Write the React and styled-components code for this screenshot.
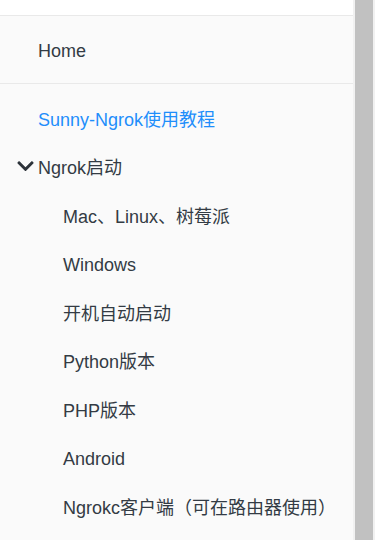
import React from "react";
import styled, { createGlobalStyle } from "styled-components";
import { FaChevronDown } from "react-icons/fa";

const GlobalStyle = createGlobalStyle`
  html, body {
    margin: 0;
    padding: 0;
    background: #fff;
  }
  body {
    font-family: "Liberation Sans", Arial, "Noto Sans CJK SC", sans-serif;
  }
`;

const chapters = [
  "Mac、Linux、树莓派",
  "Windows",
  "开机自动启动",
  "Python版本",
  "PHP版本",
  "Android",
  "Ngrokc客户端（可在路由器使用）",
];

function App() {
  return (
    <>
      <GlobalStyle />
      <Frame>
        <Sidebar>
          <SearchArea />
          <Summary>
            <Item>
              <Link>Home</Link>
            </Item>
            <Divider />
            <Item>
              <Link $active>Sunny-Ngrok使用教程</Link>
            </Item>
            <Item>
              <Link>
                <Chevron>
                  <FaChevronDown size={19} />
                </Chevron>
                Ngrok启动
              </Link>
            </Item>
            <Articles>
              {chapters.map((c) => (
                <Item key={c}>
                  <Link>{c}</Link>
                </Item>
              ))}
            </Articles>
          </Summary>
        </Sidebar>
        <Track>
          <Thumb />
        </Track>
      </Frame>
    </>
  );
}

const Frame = styled.div`
  display: flex;
  width: 375px;
  height: 540px;
  overflow: hidden;
`;

const Sidebar = styled.nav`
  width: 353px;
  background: #fafafa;
  display: flex;
  flex-direction: column;
`;

const SearchArea = styled.div`
  height: 15px;
  background: #fff;
  border-bottom: 1px solid #e9e9e9;
`;

const Summary = styled.ul`
  list-style: none;
  margin: 0;
  padding: 11px 0 0;
`;

const Articles = styled.ul`
  list-style: none;
  margin: 0;
  padding: 0 0 0 25px;
`;

const Item = styled.li`
  margin: 0;
`;

const Divider = styled.li`
  height: 1px;
  margin: 7px 0 12px;
  background: #e9e9e9;
`;

const Link = styled.a`
  display: flex;
  align-items: center;
  position: relative;
  padding: 12px 15px 12px 38px;
  line-height: 24.5px;
  font-size: 18px;
  color: ${(p) => (p.$active ? "#1f8efa" : "#333b44")};
  text-decoration: none;
  white-space: nowrap;
`;

const Chevron = styled.span`
  position: absolute;
  left: 16px;
  top: 50%;
  transform: translateY(-60%);
  display: flex;
  color: #2d333a;
`;

const Track = styled.div`
  width: 22px;
  background: #f1f1f1;
  padding: 0 2px;
  box-sizing: border-box;
`;

const Thumb = styled.div`
  height: 100%;
  background: #c1c1c1;
  width: 18px;
`;

export default App;
